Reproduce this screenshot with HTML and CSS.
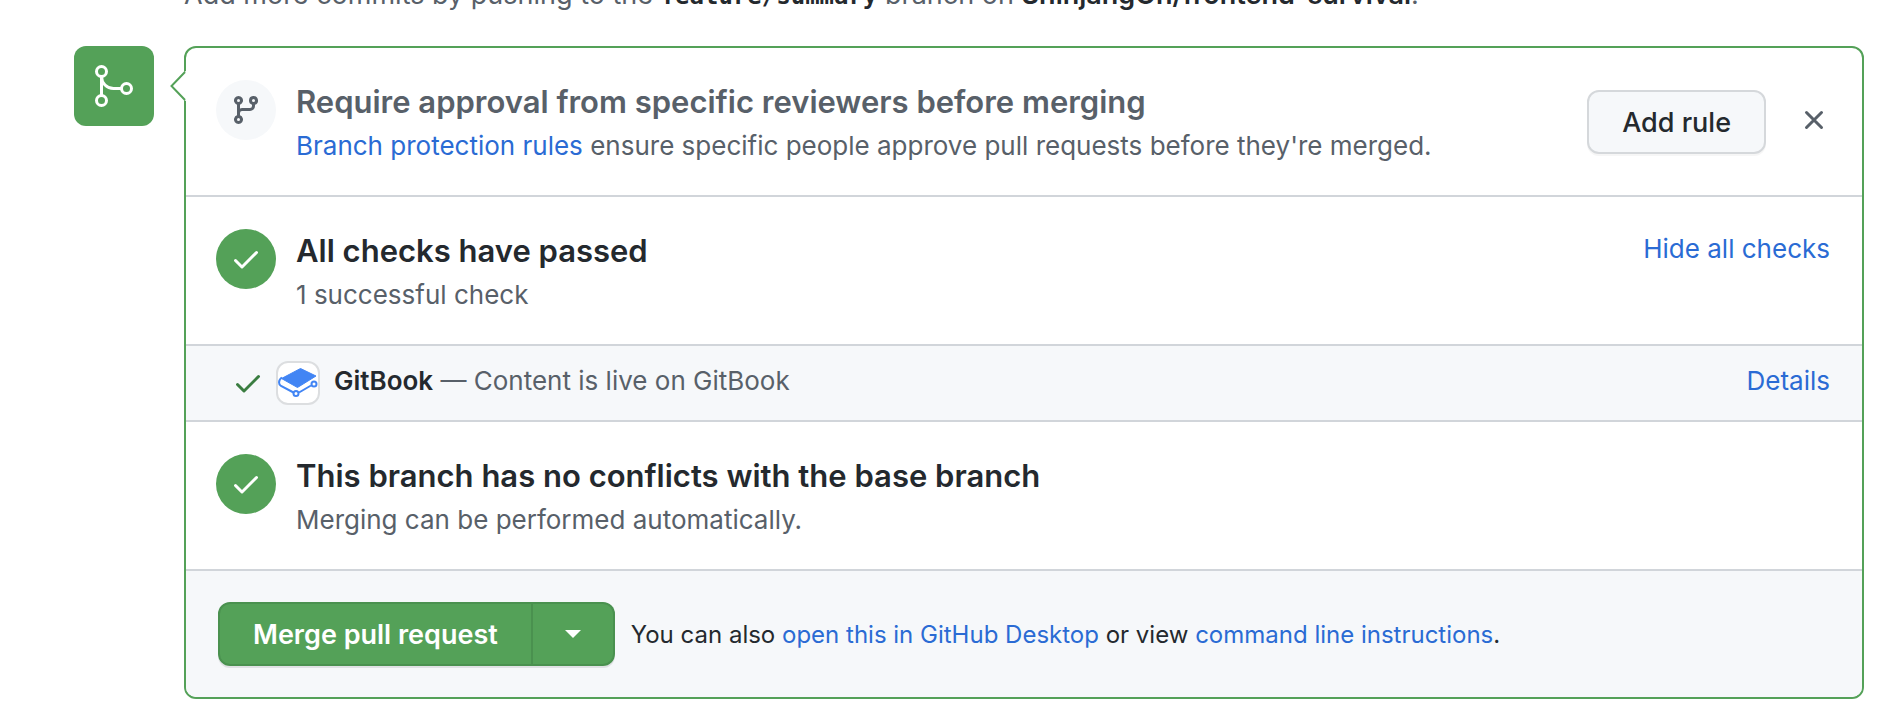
FILE: index.html
```html
<!DOCTYPE html>
<html lang="en">
<head>
<meta charset="utf-8">
<title>Merge pull request</title>
<link rel="stylesheet" href="styles.css">
</head>
<body>
<main class="page">
  <p class="push-hint">Add more commits by pushing to the <strong class="branch-name">feature/summary</strong> branch on <strong>ShinjangOh/frontend-survival</strong>.</p>
  <div class="merge">
    <div class="merge-badge">
      <svg width="48" height="48" viewBox="0 0 24 24" fill="none" stroke="currentColor" stroke-width="1.5" aria-hidden="true"><circle cx="5.75" cy="4.75" r="2.5"/><circle cx="5.75" cy="19.25" r="2.5"/><circle cx="18.25" cy="13.25" r="2.5"/><path d="M5.75 7.25v9.5M5.75 7.25a6 6 0 0 0 6 6h4"/></svg>
    </div>
    <div class="merge-box">
      <svg class="notch" width="16" height="30" viewBox="0 0 16 30" aria-hidden="true"><path d="M16 0v30l-2-1L1 15 14 1z" fill="#fff"/><path d="M15 1L1.500 15 15 29" fill="none" stroke="#54a158" stroke-width="2"/></svg>
      <section class="item">
        <span class="status status-neutral"><svg width="32" height="32" viewBox="0 0 16 16" fill="currentColor" aria-hidden="true"><path fill-rule="evenodd" d="M11.750 2.500a.75.75 0 1 0 0 1.500.75.75 0 0 0 0-1.500zm-2.250.75a2.250 2.250 0 1 1 3 2.122V6A2.500 2.500 0 0 1 10 8.500H6a1 1 0 0 0-1 1v1.128a2.251 2.251 0 1 1-1.500 0V5.372a2.250 2.250 0 1 1 1.500 0v1.836A2.492 2.492 0 0 1 6 7h4a1 1 0 0 0 1-1v-.628A2.250 2.250 0 0 1 9.500 3.250zM4.250 12a.75.75 0 1 0 0 1.500.75.75 0 0 0 0-1.500zM3.500 3.250a.75.75 0 1 1 1.500 0 .75.75 0 0 1-1.500 0z"/></svg></span>
        <div class="item-text">
          <h3 class="item-title muted">Require approval from specific reviewers before merging</h3>
          <p class="item-note"><a href="#">Branch protection rules</a> ensure specific people approve pull requests before they're merged.</p>
        </div>
        <div class="item-actions">
          <button class="btn" type="button">Add rule</button>
          <button class="close" type="button" aria-label="Dismiss"><svg width="32" height="32" viewBox="0 0 16 16" fill="none" stroke="currentColor" stroke-width="1.5" stroke-linecap="round" aria-hidden="true"><path d="M4.250 4.250l7.500 7.500M11.750 4.250l-7.500 7.500"/></svg></button>
        </div>
      </section>
      <section class="item">
        <span class="status"><svg width="32" height="32" viewBox="0 0 16 16" fill="currentColor" aria-hidden="true"><path d="M13.780 4.220a.75.75 0 0 1 0 1.060l-7.250 7.250a.75.75 0 0 1-1.060 0L2.220 9.280a.75.75 0 0 1 1.060-1.060L6 10.940l6.720-6.720a.75.75 0 0 1 1.060 0z"/></svg></span>
        <div class="item-text">
          <h3 class="item-title">All checks have passed</h3>
          <p class="item-note">1 successful check</p>
        </div>
        <button class="link-btn" type="button">Hide all checks</button>
      </section>
      <div class="check-row">
        <svg class="check-ok" width="32" height="44" viewBox="0 0 16 22" fill="currentColor" aria-hidden="true"><path transform="translate(0 3)" d="M13.780 4.220a.75.75 0 0 1 0 1.060l-7.250 7.250a.75.75 0 0 1-1.060 0L2.220 9.280a.75.75 0 0 1 1.060-1.060L6 10.940l6.720-6.720a.75.75 0 0 1 1.060 0z"/></svg>
        <span class="avatar"><svg width="40" height="40" viewBox="0 0 40 40" aria-hidden="true"><path d="M22.500 5.500L38 13 19.500 24.500 3.500 15.500z" fill="#4285f4" stroke="#4285f4" stroke-linejoin="round"/><path d="M4 14.500C0 17 .5 21.500 3 23l12.500 6.500M21 29.500l12-7" fill="none" stroke="#4285f4" stroke-width="2"/><circle cx="18" cy="30.500" r="2.500" fill="#fff" stroke="#4285f4" stroke-width="2"/><circle cx="36" cy="21" r="2.500" fill="#fff" stroke="#4285f4" stroke-width="2"/></svg></span>
        <p class="check-text"><strong>GitBook</strong> — Content is live on GitBook</p>
        <a href="#">Details</a>
      </div>
      <section class="item">
        <span class="status"><svg width="32" height="32" viewBox="0 0 16 16" fill="currentColor" aria-hidden="true"><path d="M13.780 4.220a.75.75 0 0 1 0 1.060l-7.250 7.250a.75.75 0 0 1-1.060 0L2.220 9.280a.75.75 0 0 1 1.060-1.060L6 10.940l6.720-6.720a.75.75 0 0 1 1.060 0z"/></svg></span>
        <div class="item-text">
          <h3 class="item-title">This branch has no conflicts with the base branch</h3>
          <p class="item-note">Merging can be performed automatically.</p>
        </div>
      </section>
      <footer class="footer">
        <div class="btn-group">
          <button class="btn-merge" type="button">Merge pull request</button>
          <button class="btn-caret" type="button" aria-label="Select merge method"><svg width="16" height="8" viewBox="0 0 16 8" fill="currentColor" aria-hidden="true"><path d="M0 0h16L8 8z"/></svg></button>
        </div>
        <p class="footer-text">You can also <a href="#">open this in GitHub Desktop</a> or view <a href="#">command line instructions</a>.</p>
      </footer>
    </div>
  </div>
</main>
</body>
</html>
```
FILE: styles.css
```css
* { box-sizing: border-box; }
body {
  margin: 0;
  overflow: hidden;
  background: #fff;
  color: #24292e;
  font-family: Inter, "Liberation Sans", sans-serif;
  font-size: 26px;
  line-height: 39px;
}
p, h3 { margin: 0; }
a { color: #2a6bd4; text-decoration: none; }
strong { font-weight: 600; color: #24292e; }
button { font: inherit; cursor: pointer; }
svg { display: block; }
.page { padding: 0 34px 26px 74px; margin-top: -25px; }
.push-hint { margin: 0 0 32px 110px; color: #586069; font-size: 27px; }
.branch-name {
  font-family: "DejaVu Sans Mono", monospace;
  font-size: 24px;
  font-weight: 700;
  line-height: 1;
}
.merge { display: flex; align-items: flex-start; gap: 30px; }
.merge-badge {
  display: grid;
  place-items: center;
  flex: none;
  width: 80px;
  height: 80px;
  border-radius: 12px;
  background: #54a158;
  color: #fff;
}
.merge-box {
  position: relative;
  flex: 1;
  min-width: 0;
  border: 2px solid #54a158;
  border-radius: 12px;
}
.notch { position: absolute; left: -16px; top: 23px; }
.item {
  display: flex;
  align-items: flex-start;
  padding: 32px 32px 30px 30px;
  border-bottom: 2px solid #d1d5da;
}
.status {
  display: grid;
  place-items: center;
  flex: none;
  width: 60px;
  height: 60px;
  border-radius: 50%;
  background: #54a158;
  color: #fff;
}
.status-neutral { background: #f6f8fa; color: #586069; }
.item-text { flex: 1; padding: 2px 0 0 20px; }
.item-title { margin-bottom: 4px; font-size: 31px; line-height: 40px; font-weight: 600; }
.item-note, .muted { color: #586069; }
.item-actions { display: flex; align-items: center; gap: 32px; margin-top: 10px; }
.btn {
  height: 64px;
  padding: 0 33px;
  border: 2px solid #d5d8db;
  border-radius: 12px;
  background: #f6f8fa;
  box-shadow: 0 2px 0 rgba(27, 31, 35, 0.04);
  color: #24292e;
  font-size: 27px;
  font-weight: 500;
}
.close, .link-btn { border: 0; padding: 0; background: none; }
.close { margin-bottom: 4px; color: #586069; }
.link-btn { color: #2a6bd4; }
.check-row {
  display: flex;
  align-items: flex-start;
  padding: 15px 32px 15px 46px;
  border-bottom: 2px solid #d1d5da;
  background: #f6f8fa;
}
.check-ok { color: #3a7d40; }
.avatar {
  width: 44px;
  height: 44px;
  margin: 0 14px 0 12px;
  border: 2px solid #dcdee0;
  border-radius: 12px;
  background: #fff;
}
.check-text { flex: 1; color: #586069; }
.footer {
  display: flex;
  align-items: center;
  gap: 16px;
  padding: 31px 32px;
  border-radius: 0 0 10px 10px;
  background: #f6f8fa;
}
.btn-group { display: flex; border-radius: 12px; box-shadow: 0 2px 0 rgba(27, 31, 35, 0.1); }
.btn-merge, .btn-caret {
  height: 64px;
  border: 2px solid #4a914f;
  background: #54a158;
  color: #fff;
  font-size: 27px;
  font-weight: 600;
}
.btn-merge { padding: 0 33px; border-radius: 12px 0 0 12px; }
.btn-caret { padding: 0 32px; border-left: 0; border-radius: 0 12px 12px 0; }
.footer-text { font-size: 24px; }
```
